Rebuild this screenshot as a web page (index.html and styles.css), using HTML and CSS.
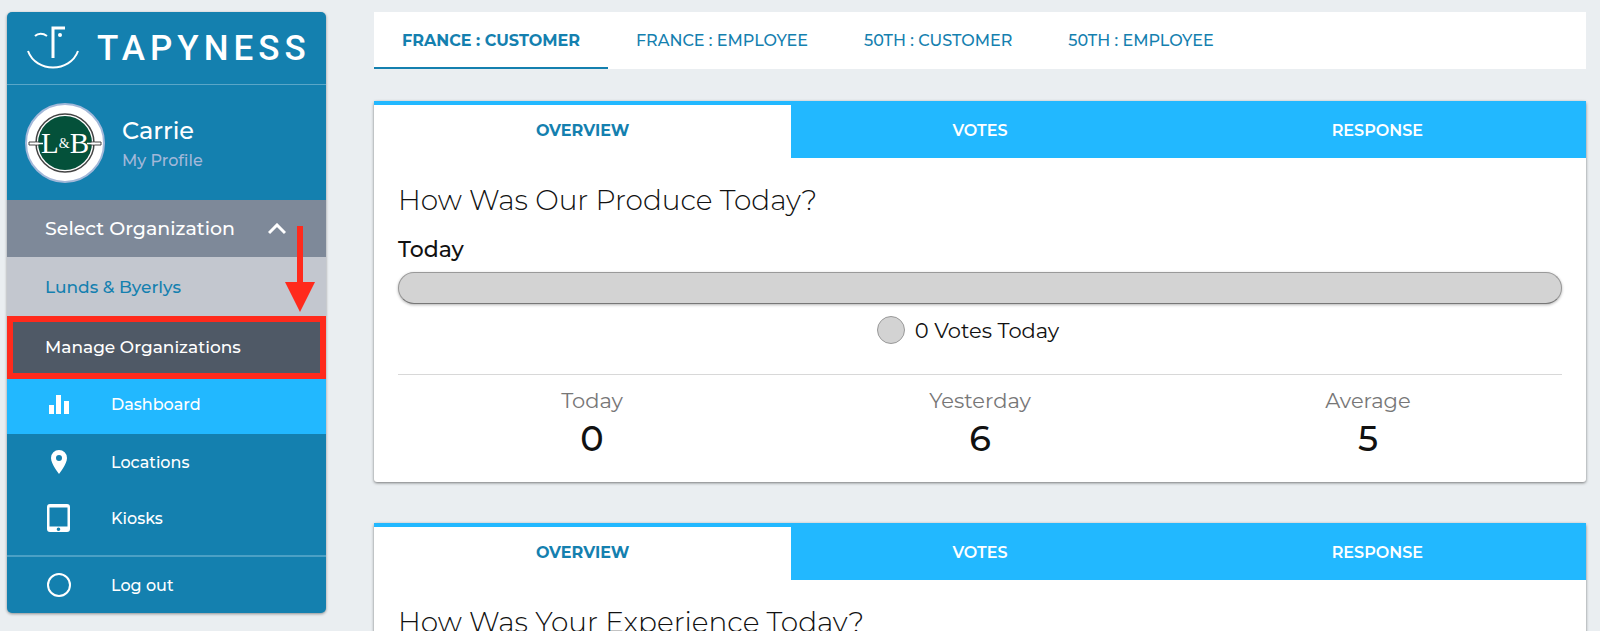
FILE: index.html
```html
<!DOCTYPE html>
<html lang="en">
<head>
  <meta charset="UTF-8">
  <meta name="viewport" content="width=device-width, initial-scale=1">
  <title>Tapyness - Dashboard</title>
  <link rel="stylesheet" href="styles.css">
</head>
<body>
  <aside class="sidebar">
    <div class="brand">
      <svg class="brand-logo" width="52" height="44" viewBox="0 0 52 44" fill="none" stroke="#fff" stroke-width="2">
        <path d="M1 25C9 47 43 47 51 25"/>
        <path d="M26 32V2h12" stroke-width="3"/>
        <path d="M8 10c3-3 8-3 12 0"/>
        <circle cx="33" cy="9" r="2" fill="#fff" stroke="none"/>
      </svg>
      <span class="brand-name">TAPYNESS</span>
    </div>

    <div class="profile">
      <svg class="avatar" width="80" height="80" viewBox="0 0 80 80">
        <circle cx="40" cy="40" r="39" fill="#fff" stroke="#a3b8d9" stroke-width="2"/>
        <circle cx="40" cy="40" r="29" fill="#fff" stroke="#444" stroke-width="1.500"/>
        <circle cx="40" cy="40" r="27" fill="#04513a"/>
        <path d="M4 39h10v3H4zM66 39h10v3H66z" fill="#fff" stroke="#444"/>
        <path d="M10 40.500h8M62 40.500h8" stroke="#fff" stroke-width="1.500"/>
        <text x="40" y="50" class="avatar-text">L<tspan class="avatar-amp" dy="-5">&amp;</tspan><tspan dy="5">B</tspan></text>
      </svg>
      <div class="profile-info">
        <div class="profile-name">Carrie</div>
        <a href="#" class="profile-link">My Profile</a>
      </div>
    </div>

    <button type="button" class="org-toggle" aria-expanded="true">
      Select Organization
      <svg width="18" height="12" viewBox="0 0 18 12" fill="none" stroke="#fff" stroke-width="3">
        <path d="M1 10l8-8 8 8"/>
      </svg>
    </button>
    <a href="#" class="org-item">Lunds &amp; Byerlys</a>
    <a href="#" class="org-manage">Manage Organizations</a>

    <nav class="menu">
      <a href="#" class="menu-item active">
        <svg width="24" height="30" viewBox="0 0 24 30" fill="#fff">
          <path d="M2 15h5v9H2zM9 5h5v19H9zM17 11h5v13h-5z"/>
        </svg>
        Dashboard
      </a>
      <a href="#" class="menu-item">
        <svg width="24" height="30" viewBox="0 0 24 30" fill="#fff" fill-rule="evenodd">
          <path d="M12 3a8 8 0 0 0-8 8c0 6 8 16 8 16s8-10 8-16a8 8 0 0 0-8-8zm0 5a3 3 0 1 1 0 6 3 3 0 0 1 0-6z"/>
        </svg>
        Locations
      </a>
      <a href="#" class="menu-item">
        <svg width="24" height="30" viewBox="0 0 24 30" fill="#fff" fill-rule="evenodd">
          <path d="M3 1h17a3 3 0 0 1 3 3v22a3 3 0 0 1-3 3H3a3 3 0 0 1-3-3V4a3 3 0 0 1 3-3zM2.500 4.500v19h18v-19zM11.500 24.500a1.800 1.800 0 1 0 0 3.600 1.800 1.800 0 0 0 0-3.600z"/>
        </svg>
        Kiosks
      </a>
    </nav>
    <div class="menu logout">
      <a href="#" class="menu-item">
        <svg width="24" height="30" viewBox="0 0 24 30" fill="none" stroke="#fff" stroke-width="2">
          <circle cx="12" cy="15" r="11"/>
        </svg>
        Log out
      </a>
    </div>

    <!-- arrow pointing at Manage Organizations -->
    <svg class="arrow" width="30" height="86" viewBox="0 0 30 86" fill="#ff2a1c">
      <path d="M12 0h6v56h12L15 86 0 56h12z"/>
    </svg>
  </aside>

  <main class="content">
    <nav class="survey-tabs">
      <a href="#" class="active">FRANCE : CUSTOMER</a>
      <a href="#">FRANCE : EMPLOYEE</a>
      <a href="#">50TH : CUSTOMER</a>
      <a href="#">50TH : EMPLOYEE</a>
    </nav>

    <section class="card">
      <div class="card-tabs">
        <button type="button" class="active">OVERVIEW</button>
        <button type="button">VOTES</button>
        <button type="button">RESPONSE</button>
      </div>
      <div class="card-body">
        <h2>How Was Our Produce Today?</h2>
        <h3>Today</h3>
        <div class="vote-bar"></div>
        <div class="legend"><span class="legend-dot"></span>0 Votes Today</div>
        <div class="stats">
          <div><span class="stat-label">Today</span><span class="stat-value">0</span></div>
          <div><span class="stat-label">Yesterday</span><span class="stat-value">6</span></div>
          <div><span class="stat-label">Average</span><span class="stat-value">5</span></div>
        </div>
      </div>
    </section>

    <section class="card">
      <div class="card-tabs">
        <button type="button" class="active">OVERVIEW</button>
        <button type="button">VOTES</button>
        <button type="button">RESPONSE</button>
      </div>
      <div class="card-body">
        <h2>How Was Your Experience Today?</h2>
      </div>
    </section>
  </main>
</body>
</html>
```

FILE: styles.css
```css
* {
  box-sizing: border-box;
}

body {
  margin: 0;
  padding: 12px 14px 12px 7px;
  display: flex;
  align-items: flex-start;
  gap: 48px;
  background-color: #eaeef1;
  font-family: Montserrat, Inter, sans-serif;
  color: #111;
}

a {
  text-decoration: none;
}

button {
  font-family: inherit;
  border: none;
  cursor: pointer;
}

/* Sidebar */
.sidebar {
  position: relative;
  flex: 0 0 319px;
  background-color: #1480af;
  border-radius: 5px;
  box-shadow: 0 1px 3px rgba(0, 0, 0, 0.4);
  color: #fff;
}

.brand {
  display: flex;
  align-items: center;
  gap: 18px;
  height: 73px;
  padding-left: 20px;
  border-bottom: 1px solid #5aa6c8;
}

.brand-name {
  font-family: Roboto, sans-serif;
  font-size: 35px;
  font-weight: 500;
  letter-spacing: 5px;
}

.profile {
  display: flex;
  align-items: center;
  gap: 17px;
  height: 115px;
  padding: 0 18px;
}

.profile-info {
  padding-top: 4px;
}

.avatar-text {
  font-family: "Liberation Serif", serif;
  font-size: 29px;
  fill: #fff;
  text-anchor: middle;
}

.avatar-amp {
  font-size: 14px;
}

.profile-name {
  font-size: 24px;
  line-height: 32px;
  font-weight: 500;
}

.profile-link {
  font-size: 16px;
  line-height: 28px;
  font-weight: 500;
  color: #a3b8d9;
}

.org-toggle {
  display: flex;
  align-items: center;
  justify-content: space-between;
  width: 100%;
  height: 57px;
  padding: 0 40px 0 38px;
  background-color: #7e8999;
  color: #fff;
  font-size: 19px;
  font-weight: 500;
}

.org-item,
.org-manage {
  display: flex;
  align-items: center;
  height: 59px;
  padding: 0 38px;
  background-color: #c3c7cf;
  color: #1480af;
  font-size: 17px;
  font-weight: 500;
}

.org-manage {
  height: 63px;
  padding: 0 32px 2px;
  background-color: #4f5966;
  border: 6px solid #ff2a1c;
  color: #fff;
}

.menu {
  padding-bottom: 9px;
}

.menu-item {
  display: flex;
  align-items: center;
  gap: 40px;
  height: 56px;
  padding: 0 40px;
  color: #fff;
  font-size: 16px;
  font-weight: 500;
}

.menu-item.active {
  height: 55px;
  padding-bottom: 4px;
  background-color: #22b8ff;
}

.logout {
  padding-bottom: 0;
  border-top: 2px solid #4ba0c5;
}

.arrow {
  position: absolute;
  top: 214px;
  right: 11px;
}

/* Content */
.content {
  flex: 1;
  min-width: 0;
}

.survey-tabs {
  display: flex;
  margin-bottom: 32px;
  background-color: #fff;
}

.survey-tabs a {
  padding: 2px 28px 0;
  border-bottom: 2px solid transparent;
  color: #1480af;
  font-size: 16px;
  line-height: 53px;
  font-weight: 500;
}

.survey-tabs .active {
  border-bottom-color: #1480af;
  font-weight: 700;
}

.card {
  margin-bottom: 41px;
  background-color: #fff;
  border-radius: 3px;
  box-shadow: 0 1px 3px rgba(0, 0, 0, 0.5);
}

.card-tabs {
  display: grid;
  grid-template-columns: repeat(3, 1fr);
  padding: 4px 10px 0;
  background-color: #22b8ff;
}

.card-tabs button {
  height: 53px;
  padding: 0 0 3px;
  background-color: transparent;
  color: #fff;
  font-size: 16px;
  font-weight: 600;
}

.card-tabs .active {
  margin: 0 -10px;
  background-color: #fff;
  color: #1480af;
  font-weight: 700;
}

.card-body {
  padding: 24px 24px 22px;
}

h2 {
  margin: 0 0 16px;
  font-size: 28px;
  line-height: 36px;
  font-weight: 300;
}

h3 {
  margin: 0 0 6px;
  font-size: 22px;
  line-height: 32px;
  font-weight: 500;
}

.vote-bar {
  height: 32px;
  background-color: #d3d3d3;
  border: 1px solid #999;
  border-bottom-color: #777;
  border-radius: 16px;
  box-shadow: 0 1px 3px rgba(0, 0, 0, 0.3);
}

.legend {
  display: flex;
  align-items: center;
  justify-content: center;
  gap: 10px;
  height: 28px;
  margin: 12px 0 30px;
  padding-right: 24px;
  font-size: 21px;
}

.legend-dot {
  width: 28px;
  height: 28px;
  background-color: #d3d3d3;
  border: 1px solid #999;
  border-radius: 50%;
}

.stats {
  display: grid;
  grid-template-columns: repeat(3, 1fr);
  padding-top: 12px;
  border-top: 1px solid #d8d8d8;
  text-align: center;
}

.stat-label,
.stat-value {
  display: block;
}

.stat-label {
  color: #777;
  font-size: 21px;
  line-height: 28px;
}

.stat-value {
  padding-top: 2px;
  font-size: 35px;
  line-height: 43px;
  font-weight: 500;
}
```
